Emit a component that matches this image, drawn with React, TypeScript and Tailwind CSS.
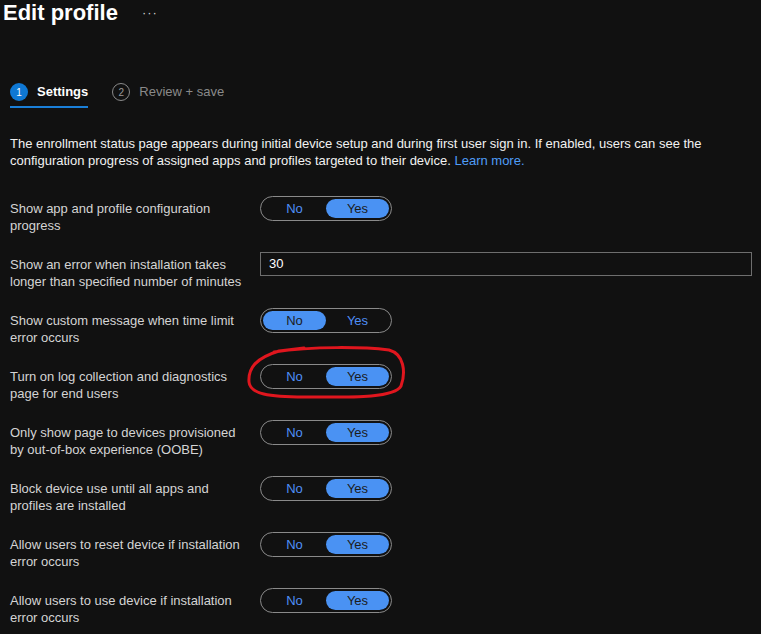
const ROWS: { label: string; kind: "toggle" | "input"; value?: "No" | "Yes"; text?: string }[] = [
  { label: "Show app and profile configuration progress", kind: "toggle", value: "Yes" },
  { label: "Show an error when installation takes longer than specified number of minutes", kind: "input", text: "30" },
  { label: "Show custom message when time limit error occurs", kind: "toggle", value: "No" },
  { label: "Turn on log collection and diagnostics page for end users", kind: "toggle", value: "Yes" },
  { label: "Only show page to devices provisioned by out-of-box experience (OOBE)", kind: "toggle", value: "Yes" },
  { label: "Block device use until all apps and profiles are installed", kind: "toggle", value: "Yes" },
  { label: "Allow users to reset device if installation error occurs", kind: "toggle", value: "Yes" },
  { label: "Allow users to use device if installation error occurs", kind: "toggle", value: "Yes" },
];

function Toggle({ value }: { value: "No" | "Yes" }) {
  return (
    <div className="flex h-[25px] w-[132px] rounded-full border border-[#8a8a8a] p-[2px]">
      {(["No", "Yes"] as const).map((opt) =>
        opt === value ? (
          <div
            key={opt}
            className="flex flex-1 items-center justify-center rounded-full bg-[#4a92f3] text-[13px] leading-none text-[#1c1c1c]"
          >
            {opt}
          </div>
        ) : (
          <div key={opt} className="flex flex-1 items-center justify-center text-[13px] leading-none text-[#4f8ff7]">
            {opt}
          </div>
        )
      )}
    </div>
  );
}

export default function App() {
  return (
    <div className="relative min-h-screen overflow-hidden bg-[#111111] font-['Liberation_Sans',Arial,sans-serif] text-[13px]">
      {/* header */}
      <div className="flex h-[26px] items-center pl-[3px]">
        <h1 className="text-[22px] font-bold leading-[26px] text-white">Edit profile</h1>
        <span className="ml-[24px] text-[13px] tracking-[1px] text-[#cfcfcf]">···</span>
      </div>

      {/* wizard tabs */}
      <div className="mt-[55px] flex gap-[24px] pl-[10px]">
        <div className="flex flex-col">
          <div className="flex h-[22px] items-center gap-[9px]">
            <span className="flex h-[18px] w-[18px] items-center justify-center rounded-full bg-[#0f78d4] text-[10px] text-white">
              1
            </span>
            <span className="font-bold text-white">Settings</span>
          </div>
          <div className="mt-[3px] h-[2px] w-full bg-[#1a7fd8]" />
        </div>
        <div className="flex h-[22px] items-center gap-[9px]">
          <span className="flex h-[18px] w-[18px] items-center justify-center rounded-full border border-[#8a8a8a] text-[10px] text-[#9a9a9a]">
            2
          </span>
          <span className="text-[#8a8a8a]">Review + save</span>
        </div>
      </div>

      {/* description */}
      <p className="mt-[27px] pl-[10px] pr-[40px] leading-[17px] text-[#f2f2f2]">
        The enrollment status page appears during initial device setup and during first user sign in. If enabled, users
        can see the configuration progress of assigned apps and profiles targeted to their device.{" "}
        <span className="text-[#4f9df7]">Learn more.</span>
      </p>

      {/* settings */}
      <div className="mt-[27px] flex flex-col pl-[10px]">
        {ROWS.map((row) => (
          <div key={row.label} className="flex h-[56px] items-start">
            <div className="w-[250px] pr-[8px] pt-[4px] leading-[17px] text-[#d4d4d4]">{row.label}</div>
            {row.kind === "toggle" ? (
              <Toggle value={row.value!} />
            ) : (
              <div className="flex h-[24px] w-[492px] items-center border border-[#6e6e6e] pl-[8px] text-white">
                {row.text}
              </div>
            )}
          </div>
        ))}
      </div>

      {/* red hand-drawn annotation */}
      <svg
        className="pointer-events-none absolute left-[244px] top-[344px]"
        width="164"
        height="58"
        viewBox="0 0 164 58"
        fill="none"
      >
        <path
          d="M30 8 C70 2 120 3 145 6 C160 10 162 28 157 42 C150 55 100 53 60 53 C25 53 6 50 5 38 C4 24 12 14 35 7 L60 4"
          stroke="#e0161e"
          strokeWidth="3"
          strokeLinecap="round"
          strokeLinejoin="round"
        />
      </svg>
    </div>
  );
}
